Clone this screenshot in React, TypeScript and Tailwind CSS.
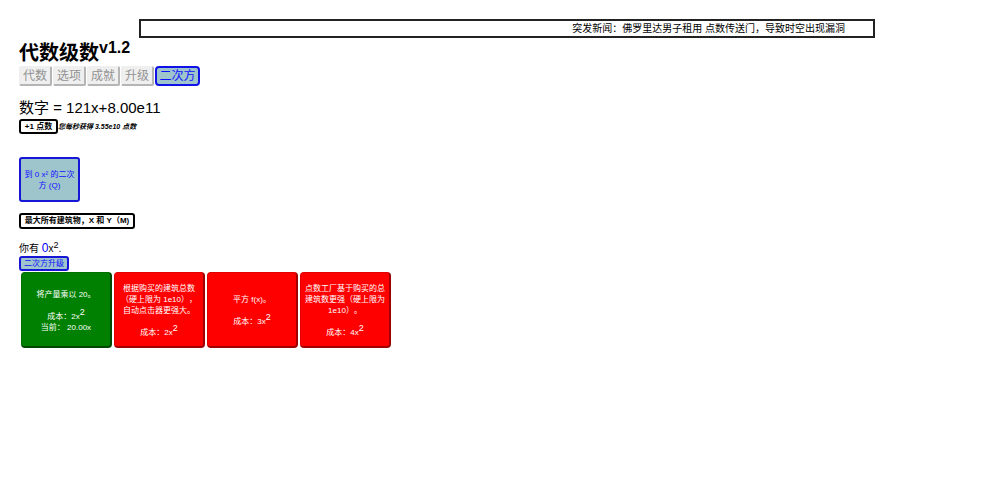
import type { ReactNode } from 'react';

const tabs = ['代数', '选项', '成就', '升级'];

type Upgrade = { lines: string[]; cost: number; current?: string; bought: boolean };

const upgrades: Upgrade[] = [
  { lines: ['将产量乘以 20。'], cost: 2, current: '20.00x', bought: true },
  { lines: ['根据购买的建筑总数', '（硬上限为 1e10），', '自动点击器更强大。'], cost: 2, bought: false },
  { lines: ['平方 f(x)。'], cost: 3, bought: false },
  { lines: ['点数工厂基于购买的总', '建筑数更强（硬上限为', '1e10）。'], cost: 4, bought: false },
];

function Sup({ children }: { children: ReactNode }) {
  return <sup className="top-[-4px] text-[9px] leading-none">{children}</sup>;
}

function Card({ upgrade }: { upgrade: Upgrade }) {
  return (
    <button
      type="button"
      className={`flex h-[76px] w-[91px] flex-col items-center justify-center rounded-[4px] border border-r-2 border-b-2 pt-[2px] text-[8px] leading-[11px] whitespace-nowrap text-white ${
        upgrade.bought
          ? 'border-[#007000] border-r-[#004800] border-b-[#004800] bg-[#008000]'
          : 'border-[#e00000] border-r-[#a00000] border-b-[#a00000] bg-[#ff0000]'
      }`}
    >
      {upgrade.lines.map((line) => (
        <span key={line}>{line}</span>
      ))}
      <span className="mt-[11px]">
        成本：{upgrade.cost}x<Sup>2</Sup>
      </span>
      {upgrade.current && <span>当前： {upgrade.current}</span>}
    </button>
  );
}

export default function App() {
  return (
    <div className="min-h-screen bg-white px-[19px] pt-[19px] font-['Liberation_Sans','Noto_Sans_CJK_SC',sans-serif] text-black [text-spacing-trim:space-all]">
      <div className="mr-[106px] ml-[120px] flex h-[19px] items-center justify-end border-2 border-[#222] pr-7 text-[10px] leading-none whitespace-nowrap">
        突发新闻：佛罗里达男子租用 点数传送门，导致时空出现漏洞
      </div>

      <h1 className="flex h-7 items-start text-[20px] leading-[30px] font-bold">
        代数级数<span className="text-[16px] leading-5">v1.2</span>
      </h1>

      <nav className="flex gap-px text-[12px] leading-4">
        {tabs.map((tab) => (
          <button
            key={tab}
            type="button"
            className="h-5 w-[33px] rounded-[2px] border border-r-2 border-b-2 border-t-[#efefef] border-r-[#b5b5b5] border-b-[#b5b5b5] border-l-[#efefef] bg-[#efefef] text-[#929292]"
          >
            {tab}
          </button>
        ))}
        <button
          type="button"
          className="h-5 w-[45px] rounded-[4px] border-2 border-[#1010e8] bg-[#9fc5cc] leading-4 whitespace-nowrap text-[#1010ff]"
        >
          二次方
        </button>
      </nav>

      <p className="mt-3 text-[15px] leading-5">数字 = 121x+8.00e11</p>
      <div className="mt-px flex items-center">
        <button
          type="button"
          className="h-[15px] w-[39px] rounded-[3px] border-2 border-black bg-white text-[8px] leading-[11px] font-bold whitespace-nowrap"
        >
          +1 点数
        </button>
        <span className="text-[7px] leading-[11px] font-bold italic">您每秒获得 3.55e10 点数</span>
      </div>

      <button
        type="button"
        className="mt-[23px] block h-[45px] w-[61px] rounded-[3px] border-2 border-[#1616d6] bg-[#9fc5cc] text-[8px] leading-[11px] whitespace-nowrap text-[#1010ff]"
      >
        到 0 x² 的二次
        <br />方 (Q)
      </button>

      <button
        type="button"
        className="mt-[11px] block h-4 w-[116px] rounded-[3px] border-2 border-black bg-white text-[8px] leading-3 font-bold whitespace-nowrap"
      >
        最大所有建筑物，X 和 Y（M)
      </button>

      <p className="mt-3 text-[10px] leading-[14px]">
        你有 <span className="text-[12px] text-[#0000ff]">0</span>x<Sup>2</Sup>.
      </p>
      <button
        type="button"
        className="block h-[15px] w-[50px] rounded-[3px] border-2 border-[#1616d6] bg-[#9fc5cc] text-[8px] leading-[11px] whitespace-nowrap text-[#1010ff]"
      >
        二次方升级
      </button>

      <div className="mt-px flex gap-[2px] pl-[2px]">
        {upgrades.map((upgrade) => (
          <Card key={upgrade.lines[0]} upgrade={upgrade} />
        ))}
      </div>
    </div>
  );
}
